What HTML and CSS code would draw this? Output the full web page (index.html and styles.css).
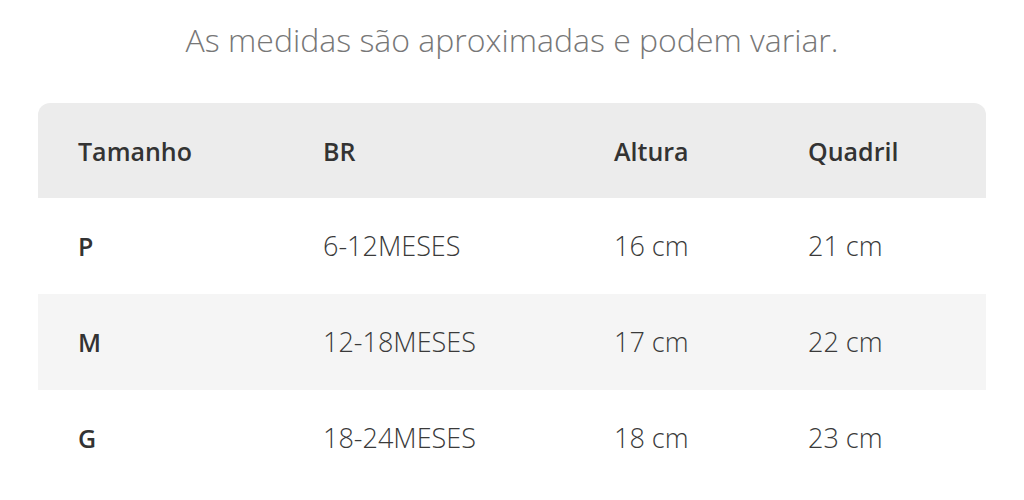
FILE: index.html
```html
<!DOCTYPE html>
<html lang="pt-BR">
<head>
<meta charset="utf-8">
<link rel="stylesheet" href="styles.css">
</head>
<body>
<div class="page">
  <p class="note">As medidas são aproximadas e podem variar.</p>
  <table class="sizes">
    <colgroup>
      <col class="c1"><col class="c2"><col class="c3"><col class="c4">
    </colgroup>
    <thead>
      <tr><th>Tamanho</th><th>BR</th><th>Altura</th><th>Quadril</th></tr>
    </thead>
    <tbody>
      <tr><td class="size">P</td><td>6-12MESES</td><td>16 cm</td><td>21 cm</td></tr>
      <tr class="alt"><td class="size">M</td><td>12-18MESES</td><td>17 cm</td><td>22 cm</td></tr>
      <tr><td class="size">G</td><td>18-24MESES</td><td>18 cm</td><td>23 cm</td></tr>
    </tbody>
  </table>
</div>
</body>
</html>
```
FILE: styles.css
```css
html, body {
  margin: 0;
  padding: 0;
  background: #ffffff;
}
body {
  font-family: "Open Sans", Lato, sans-serif;
  color: #333333;
}
.page {
  padding-top: 20px;
  padding-left: 38px;
}
.note {
  margin: 0 0 0 -38px;
  width: 1024px;
  text-align: center;
  font-size: 32px;
  line-height: 40px;
  color: #777777;
  font-weight: 300;
}
.sizes {
  margin-top: 43px;
  width: 948px;
  border-collapse: separate;
  border-spacing: 0;
  table-layout: fixed;
}
.c1 { width: 285px; }
.c2 { width: 291px; }
.c3 { width: 194px; }
.c4 { width: 178px; }
.sizes th, .sizes td {
  text-align: left;
  padding: 0;
  height: 96px;
  font-size: 27px;
  line-height: 34px;
  vertical-align: middle;
}
.sizes th {
  height: 95px;
  font-size: 25px;
  background: #ececec;
  font-weight: 600;
  color: #333333;
}
.sizes th:first-child { border-top-left-radius: 12px; }
.sizes th:last-child { border-top-right-radius: 12px; }
.sizes th:first-child, .sizes td:first-child {
  padding-left: 40px;
}
.sizes td {
  color: #3a3a3a;
  font-weight: 300;
}
.sizes td.size {
  font-size: 25px;
  font-weight: 600;
  color: #333333;
}
.sizes tr.alt td {
  background: #f5f5f5;
}
```
